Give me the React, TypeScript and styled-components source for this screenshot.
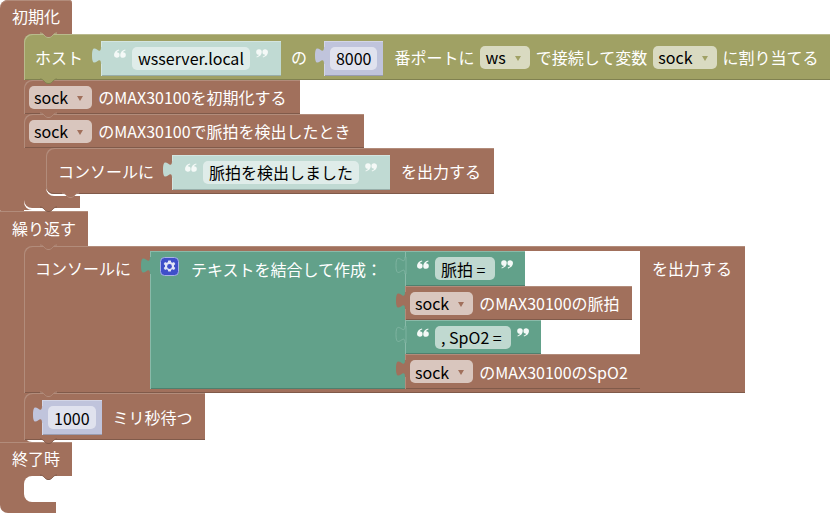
import React from "react";
import styled, { createGlobalStyle } from "styled-components";

const BROWN = { bg: "#A1705C", light: "#B28C7B", dark: "#805A4A", field: "#D9C6BE" };
const OLIVE = { bg: "#A0A164", light: "#B9BA8D", dark: "#808150", field: "#D9DAC1" };
const PALE = { bg: "#C0DAD3", light: "#D3E5E0", dark: "#99AEA9", field: "#DFECE9" };
const SEA = { bg: "#62A18A", light: "#8ABAA9", dark: "#4E806E", field: "#C0D9D0" };
const LILAC = { bg: "#C0C4DC", light: "#D3D6E7", dark: "#999CB0", field: "#E0E2EE" };
type Tone = typeof BROWN;

const Global = createGlobalStyle`
  html, body { margin: 0; padding: 0; height: 513px; overflow: hidden; background: #fff; }
  body { font-family: "Noto Sans CJK JP", "Noto Sans", sans-serif; font-size: 16px; }
`;

const Canvas = styled.div`
  display: flex;
  flex-direction: column;
  width: 830px;
  height: 513px;
  overflow: hidden;
`;

const HatGroup = styled.section`
  display: flex;
  flex-direction: column;
  align-items: flex-start;
`;

const HatLabel = styled.div<{ $first?: boolean; $tall?: boolean }>`
  position: relative;
  display: flex;
  align-items: center;
  height: ${(p) => (p.$tall ? 35 : 34)}px;
  padding: 0 12px 2px;
  box-sizing: border-box;
  color: #fff;
  line-height: 1;
  background: ${BROWN.bg};
  border-radius: ${(p) => (p.$first ? "8px 3px 0 0" : "0")};
  box-shadow: inset 0 1px 0 ${BROWN.light};
`;

const Mouth = styled.div`
  position: relative;
  display: flex;
  align-items: flex-start;
`;

const Arm = styled.div<{ $width: number; $empty?: boolean; $height?: number }>`
  position: relative;
  flex: none;
  align-self: stretch;
  width: ${(p) => p.$width + 8}px;
  margin-right: -8px;
  height: ${(p) => (p.$height ? `${p.$height}px` : "auto")};
  background: ${BROWN.bg};
  &::after {
    content: "";
    position: absolute;
    right: 0;
    bottom: 0;
    width: 8px;
    height: ${(p) => (p.$empty ? "100%" : "10px")};
    background: #fff;
    border-radius: ${(p) => (p.$empty ? "8px 0 0 8px" : "0 0 0 8px")};
  }
`;

const Content = styled.div`
  position: relative;
  z-index: 1;
  display: flex;
  flex-direction: column;
  align-items: flex-start;
  padding-bottom: 2px;
`;

const Block = styled.div<{ $tone: Tone; $h?: number; $start?: boolean; $pad?: number; $end?: number }>`
  position: relative;
  display: flex;
  align-items: ${(p) => (p.$start ? "flex-start" : "center")};
  gap: 6px;
  height: ${(p) => p.$h ?? 34}px;
  padding: ${(p) => (p.$start ? "5px" : "0")} ${(p) => p.$end ?? 13}px 0 ${(p) => p.$pad ?? 5}px;
  box-sizing: border-box;
  background: ${(p) => p.$tone.bg};
  box-shadow: inset 1px 1px 0 ${(p) => p.$tone.light}, inset 0 -1px 0 ${(p) => p.$tone.dark};
`;

const StackBlock = styled(Block)<{ $round?: boolean }>`
  border-radius: ${(p) => (p.$round ? "8px 0 0 8px" : "8px 0 0 0")};
`;

const Label = styled.span<{ $lh?: number }>`
  color: #fff;
  white-space: nowrap;
  line-height: ${(p) => (p.$lh ? `${p.$lh}px` : "1")};
`;

const Foot = styled.div<{ $w: number; $h: number }>`
  position: relative;
  width: ${(p) => p.$w}px;
  height: ${(p) => p.$h}px;
  background: ${BROWN.bg};
  border-radius: 0 0 0 8px;
`;

const BumpSvg = styled.svg<{ $left: number }>`
  position: absolute;
  z-index: 3;
  left: ${(p) => p.$left}px;
  top: 100%;
  margin-top: -1px;
  overflow: visible;
`;

const Bump = ({ left, fill, edge }: { left: number; fill: string; edge: string }) => (
  <BumpSvg $left={left} width="17" height="5" viewBox="0 0 17 5">
    <path d="M0 0c2 0 3 1 4 2s2 2.500 4 2.500h1c2 0 3-1.500 4-2.500s2-2 4-2z" fill={fill} />
    <path d="M0 0c2 0 3 1 4 2s2 2.500 4 2.500h1c2 0 3-1.500 4-2.500s2-2 4-2" fill="none" stroke={edge} strokeWidth="1" />
  </BumpSvg>
);

const Socket = styled.div<{ $ml?: number; $mr?: number; $top?: number }>`
  flex: none;
  margin: ${(p) => p.$top ?? 2}px ${(p) => p.$mr ?? 5}px 0 ${(p) => p.$ml ?? 11}px;
`;

const Value = styled.div<{ $tone: Tone; $pad?: number; $h?: number; $end?: number }>`
  position: relative;
  display: flex;
  align-items: center;
  gap: 6px;
  height: ${(p) => p.$h ?? 35}px;
  padding: 0 ${(p) => p.$end ?? p.$pad ?? 13}px 0 ${(p) => p.$pad ?? 13}px;
  box-sizing: border-box;
  background: ${(p) => p.$tone.bg};
  box-shadow: inset 1px 1px 0 ${(p) => p.$tone.light}, inset 0 -1px 0 ${(p) => p.$tone.dark};
`;

const TabSvg = styled.svg`
  position: absolute;
  left: -9px;
  top: 5px;
  overflow: visible;
`;

const Tab = ({ fill, edge }: { fill: string; edge?: string }) => (
  <TabSvg width="10" height="19" viewBox="0 0 10 19">
    <path
      d="M10 1H9c0 11-9-8-9 8.500s9-3 9 8.500h1z"
      fill={fill}
      stroke={edge ?? "none"}
      strokeWidth="0.7"
    />
  </TabSvg>
);

const Field = styled.span<{ $tone: Tone; $pad?: number }>`
  display: flex;
  align-items: center;
  height: 23px;
  padding: 0 ${(p) => p.$pad ?? 6}px;
  color: #000;
  white-space: pre;
  line-height: 1;
  background: ${(p) => p.$tone.field};
  border-radius: 5px;
`;

const Caret = styled.i<{ $color: string }>`
  width: 0;
  height: 0;
  margin: 2px 4px 0 9px;
  border-style: solid;
  border-width: 5px 3px 0;
  border-color: ${(p) => p.$color} transparent transparent;
`;

const Drop = ({ text, tone }: { text: string; tone: Tone }) => (
  <Field $tone={tone} $pad={5}>
    {text}
    <Caret $color={tone.bg} />
  </Field>
);

const QuoteSvg = styled.svg<{ $flip?: boolean }>`
  flex: none;
  margin-top: -9px;
  transform: ${(p) => (p.$flip ? "rotate(180deg)" : "none")};
`;

const QUOTE = "M5.200 .3C2 1.200 0 3.300 0 6A2.900 2.900 0 1 0 2.900 3.200C3.100 2.400 4.200 1.800 5.500 1.400Z";
const Quote = ({ flip }: { flip?: boolean }) => (
  <QuoteSvg $flip={flip} width="12" height="9" viewBox="0 0 12.500 9" fill="#F4F9F7">
    <path d={QUOTE} />
    <path d={QUOTE} transform="translate(6.500)" />
  </QuoteSvg>
);

const TextValue = ({ tone, text, pad, h, edge }: { tone: Tone; text: string; pad?: number; h?: number; edge?: string }) => (
  <Value $tone={tone} $pad={pad} $h={h}>
    <Tab fill={tone.bg} edge={edge} />
    <Quote />
    <Field $tone={tone}>{text}</Field>
    <Quote flip />
  </Value>
);

const NumberValue = ({ text }: { text: string }) => (
  <Value $tone={LILAC} $pad={6}>
    <Tab fill={LILAC.bg} />
    <Field $tone={LILAC}>{text}</Field>
  </Value>
);

const Join = styled.div`
  position: relative;
  display: flex;
  height: 138px;
`;

const JoinHead = styled.div`
  display: flex;
  align-items: flex-start;
  gap: 12px;
  width: 255px;
  padding: 6px 0 0 10px;
  box-sizing: border-box;
  background: ${SEA.bg};
  box-shadow: inset 1px 1px 0 ${SEA.light}, inset 0 -1px 0 ${SEA.dark};
`;

const JoinSlots = styled.div`
  display: flex;
  flex-direction: column;
  align-items: flex-start;
  width: 235px;
  background: #fff;
`;

const Gear = styled.svg`
  flex: none;
`;

const Mutator = () => (
  <Gear width="19" height="19" viewBox="0 0 19 19">
    <rect x="0.500" y="0.500" width="18" height="18" rx="4" fill="#3F4FC9" stroke="#A9B1E6" />
    <path
      d="M8.200 3.500h2.600l.4 1.700 1.300.6 1.500-.9 1.300 2.200-1.300 1.200v1.400l1.300 1.200-1.300 2.200-1.500-.9-1.300.6-.4 1.700H8.200l-.4-1.700-1.300-.6-1.500.9-1.300-2.200 1.300-1.200V8.300L3.700 7.100 5 4.900l1.500.9 1.300-.6z"
      fill="#E4E6F6"
    />
    <circle cx="9.500" cy="9.500" r="2.400" fill="#3F4FC9" />
  </Gear>
);

export default function App() {
  return (
    <Canvas>
      <Global />

      <HatGroup>
        <HatLabel $first>
          初期化
          <Bump left={40} fill={BROWN.bg} edge={OLIVE.light} />
        </HatLabel>
        <Mouth>
          <Arm $width={24} />
          <Content>
            <StackBlock $tone={OLIVE} $h={46} $pad={11} $end={12}>
              <Label>ホスト</Label>
              <Socket $ml={12} $mr={4}>
                <TextValue tone={PALE} text="wsserver.local" />
              </Socket>
              <Label>の</Label>
              <Socket $ml={11} $mr={5}>
                <NumberValue text="8000" />
              </Socket>
              <Label>番ポートに</Label>
              <Drop text="ws" tone={OLIVE} />
              <Label>で接続して変数</Label>
              <Drop text="sock" tone={OLIVE} />
              <Label>に割り当てる</Label>
              <Bump left={16} fill={OLIVE.bg} edge={OLIVE.dark} />
            </StackBlock>
            <StackBlock $tone={BROWN}>
              <Drop text="sock" tone={BROWN} />
              <Label>のMAX30100を初期化する</Label>
              <Bump left={16} fill={BROWN.bg} edge={BROWN.light} />
            </StackBlock>
            <StackBlock $tone={BROWN}>
              <Drop text="sock" tone={BROWN} />
              <Label>のMAX30100で脈拍を検出したとき</Label>
            </StackBlock>
            <Mouth>
              <Arm $width={22} />
              <Content>
                <StackBlock $tone={BROWN} $h={46} $pad={12} $round>
                  <Label>コンソールに</Label>
                  <Socket $ml={12}>
                    <TextValue tone={PALE} text="脈拍を検出しました" />
                  </Socket>
                  <Label>を出力する</Label>
                  <Bump left={16} fill={BROWN.bg} edge={BROWN.light} />
                </StackBlock>
              </Content>
            </Mouth>
            <Foot $w={56} $h={12}>
              <Bump left={16} fill={BROWN.bg} edge={BROWN.dark} />
            </Foot>
          </Content>
        </Mouth>
        <Foot $w={24} $h={1} />
      </HatGroup>

      <HatGroup>
        <HatLabel $tall>
          繰り返す
          <Bump left={40} fill={BROWN.bg} edge={BROWN.light} />
        </HatLabel>
        <Mouth>
          <Arm $width={24} />
          <Content>
            <StackBlock $tone={BROWN} $h={147} $pad={11} $end={13} $start>
              <Label $lh={35}>コンソールに</Label>
              <Socket $ml={13} $mr={6} $top={0}>
                <Join>
                  <Tab fill={SEA.bg} />
                  <JoinHead>
                    <Mutator />
                    <Label $lh={24}>テキストを結合して作成：</Label>
                  </JoinHead>
                  <JoinSlots>
                    <TextValue tone={SEA} text={"脈拍 =\u00A0"} pad={12} h={35} edge={SEA.light} />
                    <Value $tone={BROWN} $pad={5} $end={12} $h={34}>
                      <Tab fill={BROWN.bg} />
                      <Drop text="sock" tone={BROWN} />
                      <Label>のMAX30100の脈拍</Label>
                    </Value>
                    <TextValue tone={SEA} text={", SpO2 =\u00A0"} pad={12} h={34} edge={SEA.light} />
                    <Value $tone={BROWN} $pad={5} $end={12} $h={35}>
                      <Tab fill={BROWN.bg} />
                      <Drop text="sock" tone={BROWN} />
                      <Label>のMAX30100のSpO2</Label>
                    </Value>
                  </JoinSlots>
                </Join>
              </Socket>
              <Label $lh={35}>を出力する</Label>
              <Bump left={16} fill={BROWN.bg} edge={BROWN.light} />
            </StackBlock>
            <StackBlock $tone={BROWN} $h={47} $pad={7} $end={12}>
              <Socket>
                <NumberValue text="1000" />
              </Socket>
              <Label>ミリ秒待つ</Label>
              <Bump left={16} fill={BROWN.bg} edge={BROWN.dark} />
            </StackBlock>
          </Content>
        </Mouth>
      </HatGroup>

      <HatGroup>
        <HatLabel>
          終了時
          <Bump left={40} fill={BROWN.bg} edge={BROWN.dark} />
        </HatLabel>
        <Mouth>
          <Arm $width={24} $empty $height={26} />
        </Mouth>
        <Foot $w={56} $h={11} />
      </HatGroup>
    </Canvas>
  );
}
